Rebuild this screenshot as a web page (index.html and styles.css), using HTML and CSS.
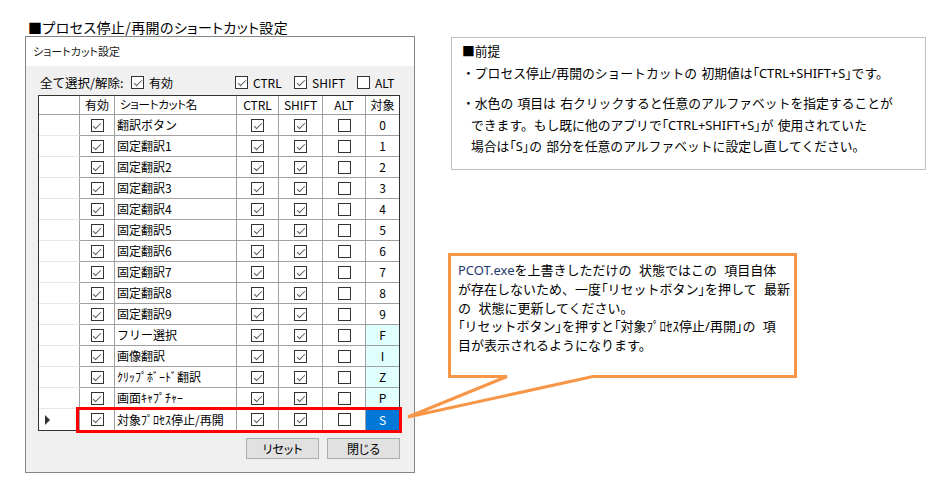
FILE: index.html
```html
<!DOCTYPE html>
<html lang="ja">
<head>
<meta charset="utf-8">
<title>ショートカット設定</title>
<link rel="stylesheet" href="styles.css">
</head>
<body>
<div class="page">
  <div class="left">
    <div class="doc-title">■プロセス停止/再開のショートカット設定</div>
    <div class="win">
      <div class="win-title">ショートカット設定</div>
      <div class="win-body">
        <div class="toolbar">
          <span class="tb-label">全て選択/解除:</span>
          <span class="opt o-valid"><span class="cb on"></span>有効</span>
          <span class="opt o-ctrl"><span class="cb on"></span>CTRL</span>
          <span class="opt o-shift"><span class="cb on"></span>SHIFT</span>
          <span class="opt o-alt"><span class="cb"></span>ALT</span>
        </div>
        <div class="grid">
          <div class="row head">
            <div class="c rh"></div><div class="c">有効</div><div class="c name hn">ショートカット名</div><div class="c">CTRL</div><div class="c">SHIFT</div><div class="c">ALT</div><div class="c key">対象</div>
          </div>
          <div class="row"><div class="c rh"></div><div class="c"><span class="cb on"></span></div><div class="c name">翻訳ボタン</div><div class="c"><span class="cb on"></span></div><div class="c"><span class="cb on"></span></div><div class="c"><span class="cb"></span></div><div class="c key">0</div></div>
          <div class="row"><div class="c rh"></div><div class="c"><span class="cb on"></span></div><div class="c name">固定翻訳1</div><div class="c"><span class="cb on"></span></div><div class="c"><span class="cb on"></span></div><div class="c"><span class="cb"></span></div><div class="c key">1</div></div>
          <div class="row"><div class="c rh"></div><div class="c"><span class="cb on"></span></div><div class="c name">固定翻訳2</div><div class="c"><span class="cb on"></span></div><div class="c"><span class="cb on"></span></div><div class="c"><span class="cb"></span></div><div class="c key">2</div></div>
          <div class="row"><div class="c rh"></div><div class="c"><span class="cb on"></span></div><div class="c name">固定翻訳3</div><div class="c"><span class="cb on"></span></div><div class="c"><span class="cb on"></span></div><div class="c"><span class="cb"></span></div><div class="c key">3</div></div>
          <div class="row"><div class="c rh"></div><div class="c"><span class="cb on"></span></div><div class="c name">固定翻訳4</div><div class="c"><span class="cb on"></span></div><div class="c"><span class="cb on"></span></div><div class="c"><span class="cb"></span></div><div class="c key">4</div></div>
          <div class="row"><div class="c rh"></div><div class="c"><span class="cb on"></span></div><div class="c name">固定翻訳5</div><div class="c"><span class="cb on"></span></div><div class="c"><span class="cb on"></span></div><div class="c"><span class="cb"></span></div><div class="c key">5</div></div>
          <div class="row"><div class="c rh"></div><div class="c"><span class="cb on"></span></div><div class="c name">固定翻訳6</div><div class="c"><span class="cb on"></span></div><div class="c"><span class="cb on"></span></div><div class="c"><span class="cb"></span></div><div class="c key">6</div></div>
          <div class="row"><div class="c rh"></div><div class="c"><span class="cb on"></span></div><div class="c name">固定翻訳7</div><div class="c"><span class="cb on"></span></div><div class="c"><span class="cb on"></span></div><div class="c"><span class="cb"></span></div><div class="c key">7</div></div>
          <div class="row"><div class="c rh"></div><div class="c"><span class="cb on"></span></div><div class="c name">固定翻訳8</div><div class="c"><span class="cb on"></span></div><div class="c"><span class="cb on"></span></div><div class="c"><span class="cb"></span></div><div class="c key">8</div></div>
          <div class="row"><div class="c rh"></div><div class="c"><span class="cb on"></span></div><div class="c name">固定翻訳9</div><div class="c"><span class="cb on"></span></div><div class="c"><span class="cb on"></span></div><div class="c"><span class="cb"></span></div><div class="c key">9</div></div>
          <div class="row"><div class="c rh"></div><div class="c"><span class="cb on"></span></div><div class="c name">フリー選択</div><div class="c"><span class="cb on"></span></div><div class="c"><span class="cb on"></span></div><div class="c"><span class="cb"></span></div><div class="c key cyan">F</div></div>
          <div class="row"><div class="c rh"></div><div class="c"><span class="cb on"></span></div><div class="c name">画像翻訳</div><div class="c"><span class="cb on"></span></div><div class="c"><span class="cb on"></span></div><div class="c"><span class="cb"></span></div><div class="c key cyan">I</div></div>
          <div class="row"><div class="c rh"></div><div class="c"><span class="cb on"></span></div><div class="c name">ｸﾘｯﾌﾟﾎﾞｰﾄﾞ翻訳</div><div class="c"><span class="cb on"></span></div><div class="c"><span class="cb on"></span></div><div class="c"><span class="cb"></span></div><div class="c key cyan">Z</div></div>
          <div class="row"><div class="c rh"></div><div class="c"><span class="cb on"></span></div><div class="c name">画面ｷｬﾌﾟﾁｬｰ</div><div class="c"><span class="cb on"></span></div><div class="c"><span class="cb on"></span></div><div class="c"><span class="cb"></span></div><div class="c key cyan">P</div></div>
          <div class="row current"><div class="c rh"><span class="arrow"></span></div><div class="c"><span class="cb on"></span></div><div class="c name">対象ﾌﾟﾛｾｽ停止/再開</div><div class="c"><span class="cb on"></span></div><div class="c"><span class="cb on"></span></div><div class="c"><span class="cb"></span></div><div class="c key sel">S</div><div class="hl"></div></div>
        </div>
        <div class="buttons"><button class="btn">リセット</button><button class="btn">閉じる</button></div>
      </div>
    </div>
  </div>
  <div class="note">
    <p class="n-line">■前提</p>
    <p class="n-line">・プロセス停止/再開のショートカットの 初期値は<span class="pk">「</span>CTRL+SHIFT+S<span class="pk">」</span>です。</p>
    <p class="n-line n-gap">・水色の 項目は 右クリックすると任意のアルファベットを指定することが</p>
    <p class="n-line n-ind">できます。もし既に他のアプリで<span class="pk">「</span>CTRL+SHIFT+S<span class="pk">」</span>が 使用されていた</p>
    <p class="n-line n-ind">場合は<span class="pk">「</span>S<span class="pk">」</span>の 部分を任意のアルファベットに設定し直してください。</p>
  </div>
  <div class="callout">
    <svg class="callout-shape" width="400" height="180" viewBox="0 0 400 180">
      <path d="M49.5,9.5 H395.5 V131.5 H193 L8,172 L107,131.5 H49.5 Z" fill="#fff" stroke="#f79646" stroke-width="3"/>
    </svg>
    <div class="callout-text"><span class="exe">PCOT.exe</span>を上書きしただけの 状態ではこの 項目自体<br>が存在しないため、一度<span class="pk">「</span>リセットボタン<span class="pk">」</span>を押して 最新<br>の 状態に更新してください。<br><span class="pk">「</span>リセットボタン<span class="pk">」</span>を押すと<span class="pk">「</span>対象ﾌﾟﾛｾｽ停止/再開<span class="pk">」</span>の 項<br>目が表示されるようになります。</div>
  </div>
</div>
</body>
</html>
```

FILE: styles.css
```css
html, body {
  margin: 0;
  padding: 0;
  background: #fff;
}
body {
  font-family: "Noto Sans CJK JP", "Noto Sans", sans-serif;
  color: #000;
}
.page {
  position: relative;
  width: 951px;
  height: 487px;
  box-sizing: border-box;
  padding: 18px 0 0 25px;
  display: flex;
  align-items: flex-start;
  overflow: hidden;
}
.left {
  width: 390px;
  flex: none;
}
.doc-title {
  height: 18px;
  line-height: 18px;
  font-size: 14px;
  margin-left: 3px;
  letter-spacing: 0.4px;
  font-feature-settings: "palt";
  white-space: nowrap;
}
.win {
  width: 390px;
  box-sizing: border-box;
  border: 1px solid #858585;
  background: #f0f0f0;
}
.win-title {
  height: 29px;
  line-height: 29px;
  background: #fff;
  padding-left: 7px;
  font-size: 11px;
  font-feature-settings: "palt";
  color: #1a1a1a;
}
.win-body {
  height: 406px;
  box-sizing: border-box;
  padding: 0 14px 0 12px;
}
.toolbar {
  height: 29px;
  box-sizing: border-box;
  padding: 3px 0 0 2px;
  display: flex;
  align-items: center;
  font-size: 12px;
  white-space: nowrap;
}
.tb-label {
  width: 91px;
  font-size: 12.5px;
}
.opt {
  display: flex;
  align-items: center;
  gap: 5px;
}
.o-valid { width: 104px; }
.o-ctrl { width: 59px; }
.o-shift { width: 63px; }
.cb {
  display: inline-block;
  position: relative;
  width: 13px;
  height: 13px;
  box-sizing: border-box;
  border: 1px solid #333;
  background: #fff;
  flex: none;
}
.cb.on::after {
  content: "";
  position: absolute;
  left: 3.5px;
  top: 1px;
  width: 3px;
  height: 7px;
  border: solid #5a5a5a;
  border-width: 0 1px 1px 0;
  transform: rotate(45deg);
}
.grid {
  width: 362px;
  box-sizing: border-box;
  border: 1px solid #333;
  background: #fff;
}
.row {
  position: relative;
  display: grid;
  grid-template-columns: 41px 35px 122px 42px 44px 43px 33px;
  height: 21px;
}
.row.head {
  height: 19px;
}
.c {
  box-sizing: border-box;
  border-right: 1px solid #a0a0a0;
  border-bottom: 1px solid #a0a0a0;
  display: flex;
  align-items: center;
  justify-content: center;
  font-size: 12px;
  line-height: 1;
  white-space: nowrap;
  overflow: hidden;
}
.c.rh {
  border-bottom-color: #e6e6e6;
  justify-content: flex-start;
  padding-left: 6px;
}
.head .c.rh {
  border-bottom-color: #a0a0a0;
}
.row:last-child .c {
  border-bottom: 0;
}
.c.name {
  justify-content: flex-start;
  padding-left: 2px;
}
.c.hn {
  padding-left: 5px;
  font-size: 11.5px;
  letter-spacing: -0.3px;
  font-feature-settings: "palt";
}
.c.key {
  border-right: 0;
}
.c.cyan {
  background: #e0ffff;
}
.c.sel {
  background: #0078d7;
  color: #fff;
}
.arrow {
  width: 0;
  height: 0;
  border-left: 5px solid #333;
  border-top: 5px solid transparent;
  border-bottom: 5px solid transparent;
}
.hl {
  position: absolute;
  left: 37px;
  top: -2px;
  width: 326px;
  height: 26px;
  box-sizing: border-box;
  border: 3px solid #ff0000;
  pointer-events: none;
}
.buttons {
  display: flex;
  justify-content: flex-end;
  gap: 8px;
  margin-top: 7px;
}
.btn {
  width: 73px;
  height: 21px;
  padding: 0;
  border: 1px solid #adadad;
  background: #e1e1e1;
  font-family: inherit;
  font-size: 12px;
  color: #000;
  font-feature-settings: "palt";
}
.pk {
  font-feature-settings: "palt";
}
.note {
  flex: none;
  margin: 19px 0 0 36px;
  width: 475px;
  height: 133px;
  box-sizing: border-box;
  border: 1px solid #bfbfbf;
  padding: 3px 0 0 10px;
  font-family: "Noto Sans", "Noto Sans CJK JP", sans-serif;
  font-size: 12.8px;
  word-spacing: 1px;
}
.n-line {
  margin: 0;
  line-height: 21.5px;
  white-space: nowrap;
}
.n-gap {
  margin-top: 9px;
}
.n-ind {
  padding-left: 9px;
}
.callout {
  position: absolute;
  left: 400px;
  top: 245px;
  width: 400px;
  height: 180px;
}
.callout-shape {
  position: absolute;
  left: 0;
  top: 0;
}
.callout-text {
  position: relative;
  padding: 16px 0 0 58px;
  font-family: "Noto Sans", "Noto Sans CJK JP", sans-serif;
  font-size: 13px;
  line-height: 18.8px;
  word-spacing: 4px;
  white-space: nowrap;
}
.exe {
  color: #1f3a70;
}
```
